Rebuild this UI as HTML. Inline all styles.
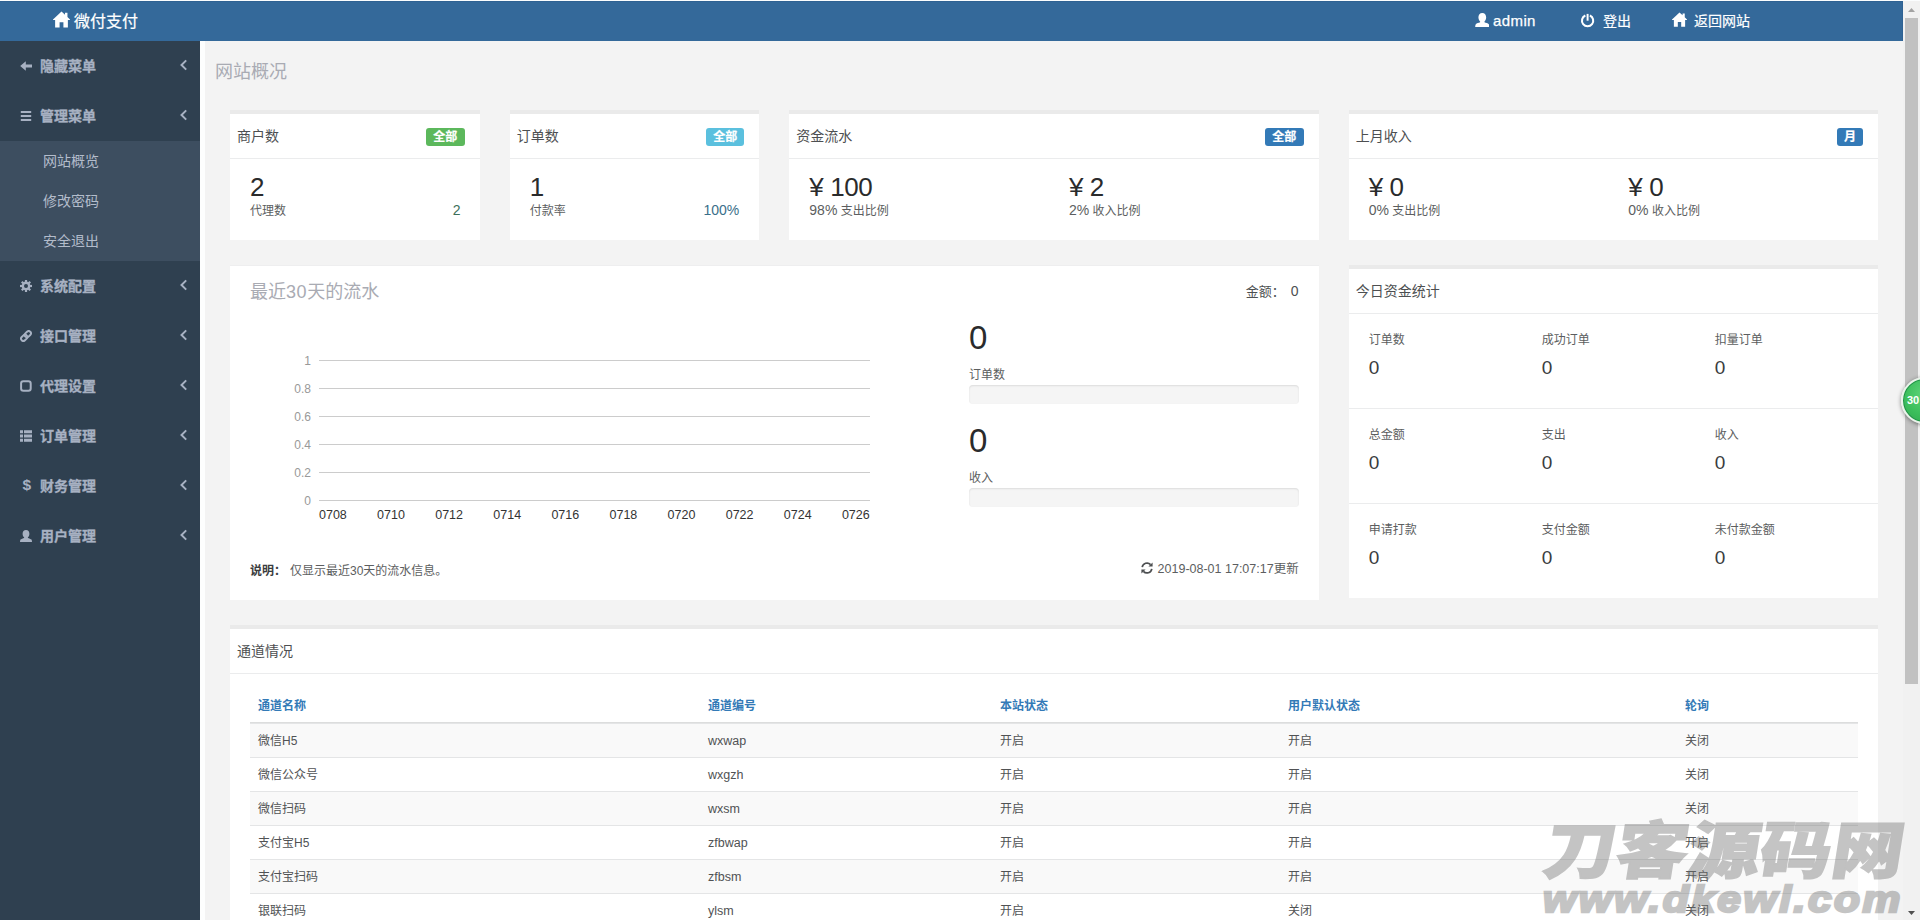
<!DOCTYPE html>
<html lang="zh-CN">
<head>
<meta charset="utf-8">
<title>微付支付 - 网站概况</title>
<style>
*{box-sizing:border-box;margin:0;padding:0}
html,body{width:1920px;height:920px;overflow:hidden}
body{position:relative;background:#f3f3f3;color:#676a6c;font-family:"Liberation Sans","Noto Sans CJK SC",sans-serif;font-size:13px;line-height:1}
.abs{position:absolute}
svg{display:block}
/* header */
#topline{left:0;top:0;width:1920px;height:1px;background:#fbfdfe;z-index:5}
#header{left:0;top:1px;width:1903px;height:40px;background:#34699a;color:#fff;border-top:1px solid #2f6293;border-right:1px solid #2f6293}
#header .t{position:absolute;top:-1px;height:40px;line-height:40px;white-space:nowrap;color:#fff}
#header svg{position:absolute}
/* sidebar */
#side{left:0;top:41px;width:200px;height:879px;background:#2f4050}
#side .mi{position:absolute;left:0;width:200px;height:50px;color:#a7b1c2;font-weight:bold;font-size:14px}
#side .mi .lbl{position:absolute;left:40px;top:0;line-height:50px;white-space:nowrap;-webkit-text-stroke:.3px #a7b1c2}
#side .mi svg.ic{position:absolute;left:20px;top:19px}
#side .mi svg.ar{position:absolute;left:179px;top:18px}
#sub{left:0;top:100px;width:200px;height:120px;background:#3d4e60}
#sub .si{position:absolute;left:43px;height:40px;line-height:40px;font-size:14px;color:#b3bccb;white-space:nowrap}
/* scrollbar */
#sbar{left:1903px;top:0;width:17px;height:920px;background:#f1f1f1}
#sthumb{left:1905px;top:18px;width:13px;height:666px;background:#c1c1c1}
/* boxes */
.box{position:absolute;background:#fff;border-top:4px solid #eaeaea}
.box .ttl{position:absolute;left:7px;top:0;height:44px;line-height:44px;font-size:14px;color:#4d4f51;white-space:nowrap}
.box .hr{position:absolute;left:0;right:0;height:1px;background:#ebeced}
.badge{position:absolute;top:14px;height:18px;line-height:18px;-webkit-text-stroke:.2px #fff;border-radius:3px;color:#fff;font-size:12px;font-weight:bold;text-align:center;white-space:nowrap}
.big{position:absolute;font-size:26px;color:#2a2b2c;white-space:nowrap;line-height:30px;letter-spacing:-.4px}
.sm{position:absolute;font-size:12px;color:#5c5e60;white-space:nowrap;line-height:16px}
.sm .n{font-size:14px}
.tx{position:absolute;white-space:nowrap}

#tbl{position:absolute;left:20px;top:59px;width:1608px}
#tbl .row{position:absolute;left:0;width:1608px;height:34px;border-top:1px solid #e4e5e6}
#tbl .row.odd{background-color:#f9f9f9}
#tbl .c{position:absolute;top:1px;line-height:33px;font-size:12px;color:#505254;white-space:nowrap}
#tbl .hd .c{font-weight:bold;color:#337ab7;line-height:34px}
#tbl .lat{font-size:12.5px}
</style>
</head>
<body>
<div class="abs" id="topline"></div>
<div class="abs" id="header">
  <svg style="left:53px;top:8.8px" width="17" height="17" viewBox="0 0 16 16"><path d="M8 0.4 L11.3 3.5 L11.3 1.6 L13.6 1.6 L13.6 5.7 L16 8 L16 8.4 L14 8.4 L14 15.6 L9.8 15.6 L9.8 10.6 L6.2 10.6 L6.2 15.6 L2 15.6 L2 8.4 L0 8.4 L0 8 Z" fill="#fff"/></svg>
  <span class="t" style="left:74px;top:0;font-size:16px;-webkit-text-stroke:.2px #fff">微付支付</span>
  <svg style="left:1474.8px;top:11px" width="14.6" height="14.2" viewBox="0 0 15 15"><path d="M7.5 0 C10.2 0 11.6 2 11.6 4.6 C11.6 6.6 10.8 8.2 9.8 9.1 L9.8 9.9 C11.2 10.5 13.5 11 14.4 12 C14.9 12.8 15 14 15 15 L0 15 C0 14 0.1 12.8 0.6 12 C1.5 11 3.8 10.5 5.2 9.9 L5.2 9.1 C4.2 8.2 3.4 6.6 3.4 4.6 C3.4 2 4.8 0 7.5 0 Z" fill="#fff"/></svg>
  <span class="t" style="left:1493px;font-size:15px;letter-spacing:.4px;-webkit-text-stroke:.25px #fff">admin</span>
  <svg style="left:1580.3px;top:11px" width="15.2" height="15.2" viewBox="0 0 15 15.4"><path d="M5.2 2.6 A5.7 5.7 0 1 0 9.8 2.6" fill="none" stroke="#fff" stroke-width="2.1" stroke-linecap="butt"/><path d="M7.5 0.9 L7.5 7.8" stroke="#fff" stroke-width="2" fill="none"/></svg>
  <span class="t" style="left:1603px;font-size:14px;-webkit-text-stroke:.2px #fff">登出</span>
  <svg style="left:1672px;top:10.4px" width="15" height="15" viewBox="0 0 16 16"><path d="M8 0.4 L11.3 3.5 L11.3 1.6 L13.6 1.6 L13.6 5.7 L16 8 L16 8.4 L14 8.4 L14 15.6 L9.8 15.6 L9.8 10.6 L6.2 10.6 L6.2 15.6 L2 15.6 L2 8.4 L0 8.4 L0 8 Z" fill="#fff"/></svg>
  <span class="t" style="left:1694px;font-size:14px;-webkit-text-stroke:.2px #fff">返回网站</span>
</div>
<div class="abs" id="sbar">
  <svg class="abs" style="left:5px;top:8px" width="7" height="4" viewBox="0 0 7 4"><path d="M0 4 L3.5 0 L7 4 Z" fill="#a3a3a3"/></svg>
  <svg class="abs" style="left:5px;top:911px" width="7" height="4" viewBox="0 0 7 4"><path d="M0 0 L3.5 4 L7 0 Z" fill="#505050"/></svg>
</div>
<div class="abs" id="sthumb"></div>
<!--HEADER-->
<div class="abs" id="side">
  <div class="mi" style="top:0px"><svg class="ic" width="12" height="12" viewBox="0 0 12 12"><path d="M0.2 6 L5.8 1.2 L5.8 4.4 L12 4.4 L12 7.6 L5.8 7.6 L5.8 10.8 Z" fill="#a7b1c2"/></svg><span class="lbl">隐藏菜单</span><svg class="ar" width="9" height="12" viewBox="0 0 9 12"><path d="M7.2 1.4 L2.5 6 L7.2 10.6" fill="none" stroke="#a7b1c2" stroke-width="2"/></svg></div>
  <div class="mi" style="top:50px"><svg class="ic" width="12" height="12" viewBox="0 0 12 12"><path d="M0.8 1 H11.2 V3 H0.8 Z M0.8 5 H11.2 V7 H0.8 Z M0.8 9 H11.2 V11 H0.8 Z" fill="#a7b1c2"/></svg><span class="lbl">管理菜单</span><svg class="ar" width="9" height="12" viewBox="0 0 9 12"><path d="M7.2 1.4 L2.5 6 L7.2 10.6" fill="none" stroke="#a7b1c2" stroke-width="2"/></svg></div>
  <div class="mi" style="top:220px"><svg class="ic" width="12" height="12" viewBox="0 0 12 12"><g fill="#a7b1c2"><circle cx="6" cy="6" r="4.4"/><g><rect x="4.9" y="0" width="2.2" height="12"/><rect x="4.9" y="0" width="2.2" height="12" transform="rotate(45 6 6)"/><rect x="4.9" y="0" width="2.2" height="12" transform="rotate(90 6 6)"/><rect x="4.9" y="0" width="2.2" height="12" transform="rotate(135 6 6)"/></g></g><circle cx="6" cy="6" r="2" fill="#2f4050"/></svg><span class="lbl">系统配置</span><svg class="ar" width="9" height="12" viewBox="0 0 9 12"><path d="M7.2 1.4 L2.5 6 L7.2 10.6" fill="none" stroke="#a7b1c2" stroke-width="2"/></svg></div>
  <div class="mi" style="top:270px"><svg class="ic" width="12" height="12" viewBox="0 0 12 12"><g fill="none" stroke="#a7b1c2" stroke-width="1.9"><rect x="-3.5" y="-2.3" width="7" height="4.6" rx="2.3" transform="translate(4.2 7.8) rotate(-45)"/><rect x="-3.5" y="-2.3" width="7" height="4.6" rx="2.3" transform="translate(7.8 4.2) rotate(-45)"/></g></svg><span class="lbl">接口管理</span><svg class="ar" width="9" height="12" viewBox="0 0 9 12"><path d="M7.2 1.4 L2.5 6 L7.2 10.6" fill="none" stroke="#a7b1c2" stroke-width="2"/></svg></div>
  <div class="mi" style="top:320px"><svg class="ic" width="12" height="12" viewBox="0 0 12 12"><rect x="1.1" y="1.3" width="9.6" height="9.4" rx="2.3" fill="none" stroke="#a7b1c2" stroke-width="2"/></svg><span class="lbl">代理设置</span><svg class="ar" width="9" height="12" viewBox="0 0 9 12"><path d="M7.2 1.4 L2.5 6 L7.2 10.6" fill="none" stroke="#a7b1c2" stroke-width="2"/></svg></div>
  <div class="mi" style="top:370px"><svg class="ic" width="12" height="12" viewBox="0 0 12 12"><path d="M0 0.3 H3 V3.3 H0 Z M4 0.3 H12 V3.3 H4 Z M0 4.5 H3 V7.5 H0 Z M4 4.5 H12 V7.5 H4 Z M0 8.7 H3 V11.7 H0 Z M4 8.7 H12 V11.7 H4 Z" fill="#a7b1c2"/></svg><span class="lbl">订单管理</span><svg class="ar" width="9" height="12" viewBox="0 0 9 12"><path d="M7.2 1.4 L2.5 6 L7.2 10.6" fill="none" stroke="#a7b1c2" stroke-width="2"/></svg></div>
  <div class="mi" style="top:420px"><span style="position:absolute;left:22.5px;top:-1px;line-height:50px;font-size:15.5px;font-weight:bold">$</span><span class="lbl">财务管理</span><svg class="ar" width="9" height="12" viewBox="0 0 9 12"><path d="M7.2 1.4 L2.5 6 L7.2 10.6" fill="none" stroke="#a7b1c2" stroke-width="2"/></svg></div>
  <div class="mi" style="top:470px"><svg class="ic" width="12" height="12" viewBox="0 0 12 12"><path d="M6 0 C8.2 0 9.4 1.6 9.4 3.7 C9.4 5.3 8.7 6.6 7.9 7.3 L7.9 7.9 C9 8.4 10.8 8.8 11.5 9.6 C11.9 10.2 12 11.2 12 12 L0 12 C0 11.2 0.1 10.2 0.5 9.6 C1.2 8.8 3 8.4 4.1 7.9 L4.1 7.3 C3.3 6.6 2.6 5.3 2.6 3.7 C2.6 1.6 3.8 0 6 0 Z" fill="#a7b1c2"/></svg><span class="lbl">用户管理</span><svg class="ar" width="9" height="12" viewBox="0 0 9 12"><path d="M7.2 1.4 L2.5 6 L7.2 10.6" fill="none" stroke="#a7b1c2" stroke-width="2"/></svg></div>
  <div class="abs" id="sub"><span class="si" style="top:0">网站概览</span><span class="si" style="top:40px">修改密码</span><span class="si" style="top:80px">安全退出</span></div>
</div>
<!--SIDEBAR-->
<div class="abs" style="left:200px;top:41px;width:5px;height:879px;background:#fdfefe"></div>
<div class="tx" style="left:215px;top:60px;font-size:18px;line-height:24px;color:#a9abb3">网站概况</div>
<div class="box" style="left:230px;top:110px;width:249.67px;height:130px">
  <span class="ttl">商户数</span>
  <span class="badge" style="right:15px;width:39px;background:#5cb85c">全部</span>
  <div class="hr" style="top:44px"></div>
  <span class="big" style="left:20px;top:58px">2</span>
  <span class="sm" style="left:20px;top:89px">代理数</span>
  <span class="sm" style="right:19px;top:88px;font-size:14px;color:#3c6f5a">2</span>
</div>
<div class="box" style="left:509.67px;top:110px;width:249.67px;height:130px">
  <span class="ttl">订单数</span>
  <span class="badge" style="right:15px;width:38px;background:#5bc0de">全部</span>
  <div class="hr" style="top:44px"></div>
  <span class="big" style="left:20px;top:58px">1</span>
  <span class="sm" style="left:20px;top:89px">付款率</span>
  <span class="sm" style="right:20px;top:88px;font-size:14px;color:#3a6f8a">100%</span>
</div>
<div class="box" style="left:789.33px;top:110px;width:529.33px;height:130px">
  <span class="ttl">资金流水</span>
  <span class="badge" style="right:15px;width:39px;background:#337ab7">全部</span>
  <div class="hr" style="top:44px"></div>
  <span class="big" style="left:20px;top:58px">¥ 100</span>
  <span class="sm" style="left:20px;top:88px"><span class="n">98%</span> 支出比例</span>
  <span class="big" style="left:279.67px;top:58px">¥ 2</span>
  <span class="sm" style="left:279.67px;top:88px"><span class="n">2%</span> 收入比例</span>
</div>
<div class="box" style="left:1348.67px;top:110px;width:529.33px;height:130px">
  <span class="ttl">上月收入</span>
  <span class="badge" style="right:15px;width:26px;background:#337ab7">月</span>
  <div class="hr" style="top:44px"></div>
  <span class="big" style="left:20px;top:58px">¥ 0</span>
  <span class="sm" style="left:20px;top:88px"><span class="n">0%</span> 支出比例</span>
  <span class="big" style="left:279.67px;top:58px">¥ 0</span>
  <span class="sm" style="left:279.67px;top:88px"><span class="n">0%</span> 收入比例</span>
</div>
<div class="abs" style="left:230px;top:265px;width:1088.67px;height:335px;background:#fff;border-top:1px solid #eeeeef">
  <span class="tx" style="left:20px;top:14px;font-size:18px;line-height:24px;color:#a9abb3">最近<span style="letter-spacing:.6px">30</span>天的流水</span>
  <span class="tx" style="right:20px;top:15.5px;font-size:13px;line-height:18px;color:#4d4f51">金额：<span style="font-size:14px;margin-left:6px">0</span></span>
  <svg class="abs" style="left:0;top:0" width="700" height="280" viewBox="0 0 700 280">
    <line x1="89" y1="94.5" x2="640" y2="94.5" stroke="#cccccc" stroke-width="1"/>
    <text x="81" y="99.0" text-anchor="end" font-size="12" fill="#999999" font-family="Liberation Sans, sans-serif">1</text>
    <line x1="89" y1="122.5" x2="640" y2="122.5" stroke="#cccccc" stroke-width="1"/>
    <text x="81" y="127.0" text-anchor="end" font-size="12" fill="#999999" font-family="Liberation Sans, sans-serif">0.8</text>
    <line x1="89" y1="150.5" x2="640" y2="150.5" stroke="#cccccc" stroke-width="1"/>
    <text x="81" y="155.0" text-anchor="end" font-size="12" fill="#999999" font-family="Liberation Sans, sans-serif">0.6</text>
    <line x1="89" y1="178.5" x2="640" y2="178.5" stroke="#cccccc" stroke-width="1"/>
    <text x="81" y="183.0" text-anchor="end" font-size="12" fill="#999999" font-family="Liberation Sans, sans-serif">0.4</text>
    <line x1="89" y1="206.5" x2="640" y2="206.5" stroke="#cccccc" stroke-width="1"/>
    <text x="81" y="211.0" text-anchor="end" font-size="12" fill="#999999" font-family="Liberation Sans, sans-serif">0.2</text>
    <line x1="89" y1="234.5" x2="640" y2="234.5" stroke="#cccccc" stroke-width="1"/>
    <text x="81" y="239.0" text-anchor="end" font-size="12" fill="#999999" font-family="Liberation Sans, sans-serif">0</text>
    <text x="89.0" y="253" font-size="12.5" fill="#333333" font-family="Liberation Sans, sans-serif">0708</text>
    <text x="147.1" y="253" font-size="12.5" fill="#333333" font-family="Liberation Sans, sans-serif">0710</text>
    <text x="205.2" y="253" font-size="12.5" fill="#333333" font-family="Liberation Sans, sans-serif">0712</text>
    <text x="263.3" y="253" font-size="12.5" fill="#333333" font-family="Liberation Sans, sans-serif">0714</text>
    <text x="321.4" y="253" font-size="12.5" fill="#333333" font-family="Liberation Sans, sans-serif">0716</text>
    <text x="379.5" y="253" font-size="12.5" fill="#333333" font-family="Liberation Sans, sans-serif">0718</text>
    <text x="437.6" y="253" font-size="12.5" fill="#333333" font-family="Liberation Sans, sans-serif">0720</text>
    <text x="495.7" y="253" font-size="12.5" fill="#333333" font-family="Liberation Sans, sans-serif">0722</text>
    <text x="553.8" y="253" font-size="12.5" fill="#333333" font-family="Liberation Sans, sans-serif">0724</text>
    <text x="611.9" y="253" font-size="12.5" fill="#333333" font-family="Liberation Sans, sans-serif">0726</text>
  </svg>
  <span class="big" style="left:739px;top:54px;font-size:33px;line-height:36px">0</span>
  <span class="sm" style="left:739px;top:101px">订单数</span>
  <div class="abs" style="left:739px;top:119px;width:329.67px;height:19px;background:#f5f5f5;border-radius:4px;box-shadow:inset 0 1px 2px rgba(0,0,0,.1)"></div>
  <span class="big" style="left:739px;top:157px;font-size:33px;line-height:36px">0</span>
  <span class="sm" style="left:739px;top:204px">收入</span>
  <div class="abs" style="left:739px;top:222px;width:329.67px;height:19px;background:#f5f5f5;border-radius:4px;box-shadow:inset 0 1px 2px rgba(0,0,0,.1)"></div>
  <span class="sm" style="left:20px;top:297px;font-weight:bold;color:#3a3c3e">说明：</span>
  <span class="sm" style="left:60px;top:297px">仅显示最近30天的流水信息。</span>
  <span class="sm" style="right:20px;top:295px;font-size:12.5px"><svg style="display:inline-block;vertical-align:-1px;margin-right:5px" width="12" height="12" viewBox="0 0 12 12"><g fill="none" stroke="#4d4f51" stroke-width="1.7"><path d="M1.2 5.2 A4.9 4.9 0 0 1 9.6 2.6"/><path d="M10.8 6.8 A4.9 4.9 0 0 1 2.4 9.4"/></g><path d="M11.6 0.4 L11.6 4.6 L7.4 4.6 Z M0.4 11.6 L0.4 7.4 L4.6 7.4 Z" fill="#4d4f51"/></svg>2019-08-01 17:07:17更新</span>
</div>
<div class="box" style="left:1348.67px;top:265px;width:529.33px;height:333px">
  <span class="ttl">今日资金统计</span>
  <div class="hr" style="top:44px"></div>
  <span class="sm" style="left:20px;top:63px">订单数</span>
  <span class="tx" style="left:20px;top:87px;font-size:19px;line-height:24px;color:#3a3c3e">0</span>
  <span class="sm" style="left:193px;top:63px">成功订单</span>
  <span class="tx" style="left:193px;top:87px;font-size:19px;line-height:24px;color:#3a3c3e">0</span>
  <span class="sm" style="left:366px;top:63px">扣量订单</span>
  <span class="tx" style="left:366px;top:87px;font-size:19px;line-height:24px;color:#3a3c3e">0</span>
  <div class="hr" style="top:139px"></div>
  <span class="sm" style="left:20px;top:158px">总金额</span>
  <span class="tx" style="left:20px;top:182px;font-size:19px;line-height:24px;color:#3a3c3e">0</span>
  <span class="sm" style="left:193px;top:158px">支出</span>
  <span class="tx" style="left:193px;top:182px;font-size:19px;line-height:24px;color:#3a3c3e">0</span>
  <span class="sm" style="left:366px;top:158px">收入</span>
  <span class="tx" style="left:366px;top:182px;font-size:19px;line-height:24px;color:#3a3c3e">0</span>
  <div class="hr" style="top:234px"></div>
  <span class="sm" style="left:20px;top:253px">申请打款</span>
  <span class="tx" style="left:20px;top:277px;font-size:19px;line-height:24px;color:#3a3c3e">0</span>
  <span class="sm" style="left:193px;top:253px">支付金额</span>
  <span class="tx" style="left:193px;top:277px;font-size:19px;line-height:24px;color:#3a3c3e">0</span>
  <span class="sm" style="left:366px;top:253px">未付款金额</span>
  <span class="tx" style="left:366px;top:277px;font-size:19px;line-height:24px;color:#3a3c3e">0</span>
</div>
<!--CONTENT-->
<div class="box" style="left:230px;top:625px;width:1648px;height:300px">
  <span class="ttl">通道情况</span>
  <div class="hr" style="top:44px"></div>
  <div id="tbl">
    <div class="row hd" style="top:0;border-top:0"><span class="c" style="left:8px">通道名称</span><span class="c" style="left:458px">通道编号</span><span class="c" style="left:750px">本站状态</span><span class="c" style="left:1038px">用户默认状态</span><span class="c" style="left:1435px">轮询</span></div>
    <div class="abs" style="left:0;top:34px;width:1608px;height:2px;background:#dcdddd"></div>
    <div class="row odd" style="top:35px"><span class="c" style="left:8px">微信H5</span><span class="c lat" style="left:458px">wxwap</span><span class="c" style="left:750px">开启</span><span class="c" style="left:1038px">开启</span><span class="c" style="left:1435px">关闭</span></div>
    <div class="row" style="top:69px"><span class="c" style="left:8px">微信公众号</span><span class="c lat" style="left:458px">wxgzh</span><span class="c" style="left:750px">开启</span><span class="c" style="left:1038px">开启</span><span class="c" style="left:1435px">关闭</span></div>
    <div class="row odd" style="top:103px"><span class="c" style="left:8px">微信扫码</span><span class="c lat" style="left:458px">wxsm</span><span class="c" style="left:750px">开启</span><span class="c" style="left:1038px">开启</span><span class="c" style="left:1435px">关闭</span></div>
    <div class="row" style="top:137px"><span class="c" style="left:8px">支付宝H5</span><span class="c lat" style="left:458px">zfbwap</span><span class="c" style="left:750px">开启</span><span class="c" style="left:1038px">开启</span><span class="c" style="left:1435px">开启</span></div>
    <div class="row odd" style="top:171px"><span class="c" style="left:8px">支付宝扫码</span><span class="c lat" style="left:458px">zfbsm</span><span class="c" style="left:750px">开启</span><span class="c" style="left:1038px">开启</span><span class="c" style="left:1435px">开启</span></div>
    <div class="row" style="top:205px"><span class="c" style="left:8px">银联扫码</span><span class="c lat" style="left:458px">ylsm</span><span class="c" style="left:750px">开启</span><span class="c" style="left:1038px">关闭</span><span class="c" style="left:1435px">关闭</span></div>
  </div>
</div>
<!--TABLE-->
<div class="abs" style="left:1901px;top:376.5px;width:47px;height:47px;border-radius:50%;background:radial-gradient(circle at 50% 35%,#5fd47a 0%,#3cbf5c 55%,#2fa84e 100%);border:2px solid #e9f3ea;box-shadow:0 1px 4px rgba(0,0,0,.45),inset 0 0 0 1px #23904a"><span class="tx" style="left:4px;top:13px;font-size:11px;font-weight:bold;color:#fff;line-height:16px">30</span></div>
<div class="abs" id="wm" style="left:0;top:0;width:1920px;height:920px;opacity:.4;pointer-events:none">
<div class="tx" id="wm1" style="left:1538px;top:809.5px;font-family:'Liberation Sans','Noto Sans CJK SC',sans-serif;font-weight:900;font-size:62px;line-height:84px;color:#6e6e6e;-webkit-text-stroke:1.5px #6e6e6e;transform-origin:0 100%;transform:skewX(-9deg) scaleX(1.16)">刀客源码网</div>
<div class="tx" id="wm2" style="left:1543px;top:878px;font-family:'Liberation Sans',sans-serif;font-weight:bold;font-style:italic;font-size:37px;line-height:44px;color:#6e6e6e;-webkit-text-stroke:2.5px #6e6e6e;letter-spacing:2.2px;transform-origin:0 100%;transform:scaleX(1.15)">www.dkewl.com</div>
</div>
<!--OVERLAY-->
</body>
</html>
